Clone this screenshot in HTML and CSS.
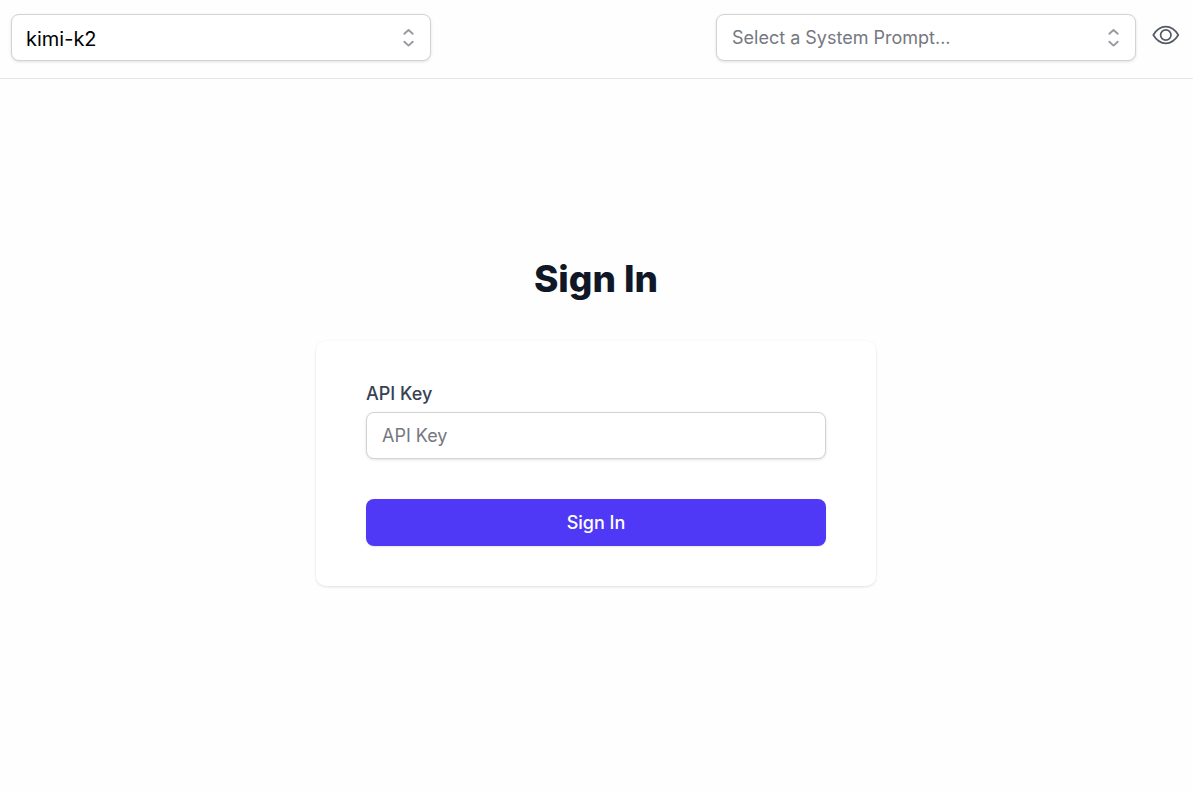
FILE: index.html
```html
<!DOCTYPE html>
<html lang="en">
<head>
<meta charset="utf-8">
<title>Sign In</title>
<link rel="stylesheet" href="styles.css">
</head>
<body>
<header class="topbar">
  <div class="combo">
    <input class="field combo-input combo-model" type="text" aria-label="Model" value="kimi-k2" spellcheck="false">
    <button class="combo-toggle" type="button" aria-label="Show models">
      <svg class="chevrons" viewBox="0 0 24 24" aria-hidden="true"><path d="M8 15.200 11.600 18.500 15.200 15.200M8 8.400 11.600 5.100 15.200 8.400"/></svg>
    </button>
  </div>
  <div class="prompt-tools">
    <div class="combo">
      <input class="field combo-input" type="text" aria-label="System prompt" placeholder="Select a System Prompt...">
      <button class="combo-toggle" type="button" aria-label="Show system prompts">
        <svg class="chevrons" viewBox="0 0 24 24" aria-hidden="true"><path d="M8 15.200 11.600 18.500 15.200 15.200M8 8.400 11.600 5.100 15.200 8.400"/></svg>
      </button>
    </div>
    <button class="icon-button" type="button" aria-label="View system prompt">
      <svg class="eye" viewBox="0 0 30 30" aria-hidden="true"><path d="M2.300 15C5.600 9.600 10 6.700 14.800 6.700s9.200 2.900 12.500 8.300C24 20.400 19.600 23.300 14.800 23.300S5.600 20.400 2.300 15Z"/><circle cx="14.800" cy="15" r="5.200"/></svg>
    </button>
  </div>
</header>
<main class="sign-in">
  <h1 class="title">Sign In</h1>
  <form class="card">
    <label class="label" for="api-key">API Key</label>
    <input class="field" id="api-key" type="password" placeholder="API Key">
    <button class="submit" type="button">Sign In</button>
  </form>
</main>
</body>
</html>
```
FILE: styles.css
```css
* { box-sizing: border-box; }

body {
  margin: 0;
  min-height: 100vh;
  background: #fefefe;
  color: #101828;
  font-family: Inter, "Liberation Sans", sans-serif;
  font-size: 18px;
  line-height: 24px;
}

button, input { font: inherit; }

button {
  padding: 0;
  border: 0;
  background: none;
  cursor: pointer;
}

.topbar {
  display: flex;
  justify-content: space-between;
  gap: 24px;
  padding: 14px 12px 17px 11px;
  border-bottom: 1px solid #e5e7eb;
}

.prompt-tools {
  display: flex;
  align-items: flex-start;
  gap: 15px;
}

.combo {
  position: relative;
  width: 420px;
}

.field {
  display: block;
  width: 100%;
  height: 47px;
  padding: 0 15px 1px;
  border: 1px solid #d1d3d6;
  border-radius: 8px;
  background: #fff;
  color: #000;
  box-shadow: 0 1px 3px rgb(0 0 0 / 12%);
}

.field::placeholder {
  color: #757880;
  opacity: 1;
}

.combo-input { padding-right: 44px; }

.combo-model {
  padding-top: 2px;
  padding-bottom: 0;
  padding-left: 14px;
  font-size: 20px;
}

.combo-toggle {
  position: absolute;
  inset: 0 8px 0 auto;
  display: flex;
  align-items: center;
}

.chevrons {
  width: 28px;
  height: 28px;
  fill: none;
  stroke: #96999e;
  stroke-width: 1.6;
  stroke-linecap: round;
  stroke-linejoin: round;
}

.icon-button {
  display: flex;
  padding-top: 6px;
}

.eye {
  width: 30px;
  height: 30px;
  fill: none;
  stroke: #545a64;
  stroke-width: 1.7;
  stroke-linecap: round;
  stroke-linejoin: round;
}

.sign-in {
  display: flex;
  flex-direction: column;
  align-items: center;
  padding: 176px 25px 40px 24px;
}

.title {
  margin: 0;
  font-size: 37px;
  font-weight: 800;
  line-height: 48px;
}

.card {
  display: flex;
  flex-direction: column;
  width: 100%;
  max-width: 560px;
  margin-top: 38px;
  padding: 41px 50px 40px;
  border-radius: 10px;
  background: #fff;
  box-shadow: 0 1px 3px rgb(0 0 0 / 12%);
}

.label {
  margin-bottom: 6px;
  color: #364153;
  font-weight: 500;
}

.submit {
  height: 47px;
  margin-top: 40px;
  border-radius: 8px;
  background: #4f39f6;
  color: #fff;
  font-weight: 500;
  box-shadow: 0 1px 2px rgb(0 0 0 / 10%);
}
```
